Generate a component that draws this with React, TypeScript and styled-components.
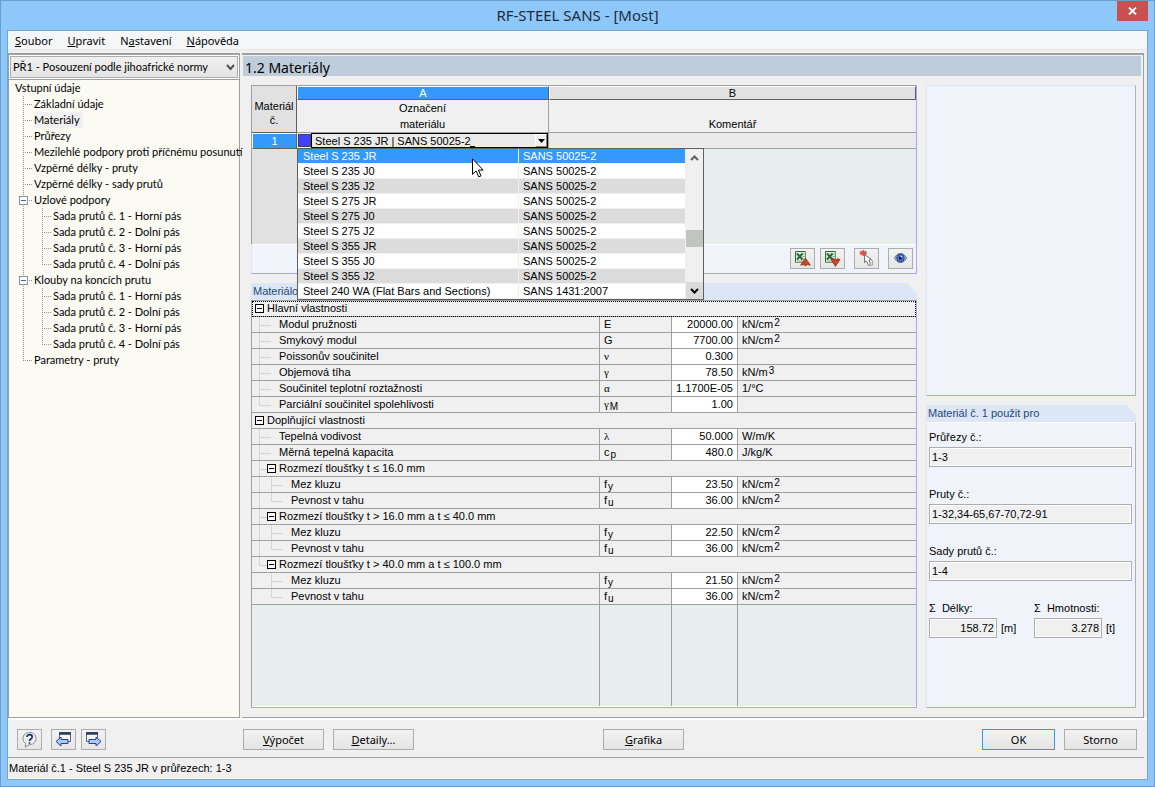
import React from "react";
import styled, { createGlobalStyle, css } from "styled-components";

const GRID_FONT = '"Liberation Sans", Arial, sans-serif';
const UI_FONT = '"Noto Sans", Tahoma, sans-serif';
const TREE_FONT = 'Lato, Tahoma, sans-serif';

const c = {
  frame: "#8ec8fb",
  face: "#f0f0f0",
  line: "#a0a0a0",
  dark: "#606060",
  header: "#e1e1e1",
  blank: "#e8eeed",
  panel: "#f0f4fa",
  panelEdge: "#a8a8f0",
  panelLight: "#dce6f6",
  select: "#3399ff",
};

const Global = createGlobalStyle`
  *, *::before, *::after { box-sizing: border-box; }
  body { margin: 0; background: ${c.frame}; color: #000; font: 11px/16px ${GRID_FONT}; }
  button, input, select { font: inherit; color: inherit; border-radius: 0; margin: 0; }
  ul { list-style: none; margin: 0; padding: 0; }
`;

/* ---------- window frame ---------- */

const Window = styled.div`
  display: flex;
  flex-direction: column;
  min-height: 100vh;
  padding: 0 6px;
  padding-bottom: 6px;
  background: ${c.frame};
  border: 1px solid #6c9cc8;
`;

const TitleBar = styled.header`
  display: grid;
  grid-template-columns: 31px 1fr 31px;
  height: 29px;
`;

const WindowTitle = styled.h1`
  grid-column: 2;
  margin: 0;
  font: 15px/29px ${UI_FONT};
  color: #1c2c3c;
  text-align: center;
`;

const CloseButton = styled.button`
  display: flex;
  align-items: center;
  justify-content: center;
  height: 20px;
  padding: 0;
  border: 0;
  background: #c75050;
`;

const Client = styled.div`
  flex: 1;
  display: flex;
  flex-direction: column;
  background: ${c.face};
  border: 1px solid #74a6d4;
`;

const MenuBar = styled.nav`
  display: flex;
  gap: 15px;
  height: 19px;
  padding: 0 7px;
  background: #f5f6f7;
  border-bottom: 1px solid #e8e8e8;
`;

const MenuItem = styled.a`
  color: #000;
  text-decoration: none;
  font: 11px/20px ${UI_FONT};
`;

const Body = styled.div`
  flex: 1;
  display: grid;
  grid-template-columns: 232px 1fr;
  gap: 2px;
  margin-top: 3px;
  padding-right: 3px;
  border-bottom: 2px solid #fff;
`;

/* ---------- navigator ---------- */

const Navigator = styled.aside`
  display: flex;
  flex-direction: column;
  background: #fff;
  border: 1px solid ${c.line};
  border-width: 2px 1px 1px 1px;
`;

const CaseBox = styled.div`
  position: relative;
  margin: 1px;
`;

const CaseSelect = styled.select`
  display: block;
  width: 100%;
  height: 22px;
  padding: 0 20px 0 2px;
  appearance: none;
  border: 1px solid #adadad;
  background: linear-gradient(#f0f0f0, #e4e4e4);
  font: 11px/20px ${TREE_FONT};
`;

const CaseArrow = styled.svg`
  position: absolute;
  right: 3px;
  top: 8px;
  pointer-events: none;
`;

const Tree = styled.ul`
  flex: 1;
  padding: 0 0 0 6px;
  border-top: 1px solid ${c.line};
  background: #fbfbf3;
  font: 11px/16px ${TREE_FONT};
`;

const TreeRow = styled.li`
  display: flex;
  height: 16px;
  white-space: nowrap;
`;

type GuideShape = { $v: "full" | "half" | "none"; $h?: boolean };

const TreeGuide = styled.span<GuideShape>`
  flex: none;
  width: 19px;
  padding: 4px 0 0 4px;
  background-repeat: no-repeat;
  background-image: repeating-linear-gradient(#909090 0 1px, transparent 1px 2px),
    repeating-linear-gradient(90deg, #909090 0 1px, transparent 1px 2px);
  background-position: 8px 0, 8px 8px;
  background-size: 1px ${(p) => ({ full: "100%", half: "9px", none: "0" })[p.$v]},
    ${(p) => (p.$h ? "9px" : "0")} 1px;
`;

const Toggle = styled.button<{ $flat?: boolean }>`
  display: block;
  flex: none;
  width: 9px;
  height: 9px;
  padding: 0;
  border: 1px solid ${(p) => (p.$flat ? "#000" : "#8a8f99")};
  background: linear-gradient(${(p) => (p.$flat ? "#000, #000" : "#3c66b0, #3c66b0")}) center / 5px 1px no-repeat, #fff;
`;

const TreeLink = styled.a<{ $current?: boolean }>`
  padding-right: 3px;
  color: #000;
  text-decoration: none;
  background: ${(p) => (p.$current ? "#f0f0f0" : "transparent")};
`;

/* ---------- work area ---------- */

const Work = styled.main`
  display: flex;
  flex-direction: column;
  border: 1px solid ${c.line};
  border-width: 2px 1px 1px 0;
  padding: 1px 2px 9px 1px;
`;

const Heading = styled.h2`
  margin: 0 0 9px;
  padding-left: 2px;
  height: 20px;
  font: 14px/23px ${UI_FONT};
  background: #bfcddb;
`;

const Columns = styled.div`
  flex: 1;
  display: grid;
  grid-template-columns: 1fr 210px;
  gap: 9px;
  padding: 0 5px 0 8px;
`;

const Stack = styled.div`
  display: flex;
  flex-direction: column;
  gap: 9px;
  min-width: 0;
`;

const Panel = styled.section`
  display: flex;
  flex-direction: column;
  height: 311px;
  background: ${c.panel};
  border: 1px solid ${c.panelEdge};
  border-top-color: ${c.panelLight};
  border-left-color: ${c.panelLight};
`;

const GridPanel = styled(Panel)`
  height: 189px;
  border-top: 0;
  border-left: 0;
`;

const Group = styled.section`
  flex: 1;
  display: flex;
  flex-direction: column;
`;

const GroupTitle = styled.h3`
  margin: 0;
  height: 17px;
  padding-left: 2px;
  font: 11px/17px ${GRID_FONT};
  color: #1c4a78;
  background: ${c.panelLight};
  clip-path: polygon(0 0, calc(100% - 10px) 0, 100% 10px, 100% 100%, 0 100%);
`;

/* ---------- materials grid ---------- */

const Grid = styled.table`
  width: 100%;
  table-layout: fixed;
  border-collapse: separate;
  border-spacing: 0;
  border-top: 1px solid ${c.line};
  border-left: 1px solid ${c.line};
  th, td { padding: 0; font-weight: normal; }
`;

const CornerHead = styled.th`
  &&& { padding-top: 8px; }
  width: 45px;
  background: ${c.header};
  border-right: 1px solid ${c.dark};
  border-bottom: 1px solid ${c.dark};
  line-height: 14px;
`;

const LetterHead = styled.th<{ $on?: boolean }>`
  width: ${(p) => (p.$on ? "252px" : "auto")};
  height: 14px;
  line-height: 12px;
  border: 1px solid #fff;
  border-right-color: ${c.dark};
  border-bottom-color: ${c.dark};
  color: ${(p) => (p.$on ? "#fff" : "#000")};
  background: ${(p) => (p.$on ? c.select : c.header)};
`;

const NameHead = styled.th`
  height: 33px;
  vertical-align: bottom;
  background: ${c.face};
  border-right: 1px solid ${c.line};
  border-bottom: 1px solid ${c.line};
  &:last-child { border-right: 0; }
`;

const RowHead = styled.th`
  height: 16px;
  line-height: 13px;
  color: #fff;
  background: ${c.select};
  border: 1px solid #fff;
  border-right-color: ${c.dark};
  border-bottom-color: ${c.dark};
`;

const GridCell = styled.td`
  background: #ebebeb;
  border-right: 1px solid ${c.line};
  border-bottom: 1px solid ${c.line};
  &:last-child { border-right: 0; }
`;

const Combo = styled.div`
  position: relative;
  display: flex;
  height: 15px;
`;

const Swatch = styled.span`
  width: 13px;
  margin: 1px 0 1px 1px;
  background: #4040ff;
  border: 1px solid #404060;
`;

const ComboBox = styled.div`
  flex: 1;
  display: flex;
  position: relative;
  min-width: 0;
  padding-left: 3px;
  border: 1px solid #000;
`;

const ComboInput = styled.input`
  flex: 1;
  min-width: 0;
  height: 13px;
  padding: 0;
  border: 0;
  outline: 0;
  background: transparent;
`;

const Caret = styled.span`
  position: absolute;
  left: 158px;
  bottom: 0;
  width: 5px;
  height: 1px;
  background: #000;
`;

const ComboButton = styled.button`
  display: flex;
  align-items: center;
  justify-content: center;
  width: 12px;
  height: 13px;
  padding: 0;
  border: 1px solid #fff;
  border-right-color: #808080;
  border-bottom-color: #808080;
  background: #f0f0f0;
`;

const Popup = styled.div`
  position: absolute;
  z-index: 2;
  top: 15px;
  left: 0;
  display: flex;
  width: 407px;
  border: 1px solid ${c.dark};
  background: #f0f0f0;
`;

const OptionList = styled.ul`
  flex: 1;
`;

const Option = styled.li<{ $on?: boolean }>`
  display: grid;
  grid-template-columns: 220px 1fr;
  height: 15px;
  line-height: 14px;
  color: ${(p) => (p.$on ? "#fff" : "#000")};
  background: #fff;
  border-bottom: 1px solid #f0f0f0;
  &:nth-child(odd) { background: #dcdcdc; }
  &&& { ${(p) => p.$on && css`background: ${c.select};`} }
  span { padding-left: 5px; white-space: nowrap; }
  span + span { padding-left: 4px; border-left: 1px solid #f0f0f0; }
`;

const ScrollBar = styled.div`
  display: flex;
  flex-direction: column;
  justify-content: space-between;
  width: 17px;
  margin-left: 1px;
  background: #f0f0f0;
`;

const ScrollButton = styled.button<{ $dark?: boolean }>`
  display: flex;
  align-items: center;
  justify-content: center;
  height: 17px;
  padding: 0;
  border: 0;
  background: ${(p) => (p.$dark ? "#dadada" : "transparent")};
`;

const Thumb = styled.span`
  height: 17px;
  margin-top: 29px;
  background: #c1c4c1;
`;

const Pointer = styled.svg`
  position: absolute;
  left: 174px;
  top: 9px;
`;

const GridBlank = styled.div`
  flex: 1;
  border-left: 45px solid ${c.header};
  background: ${c.blank};
`;

const GridFrame = styled.div`
  flex: 1;
  display: flex;
  border-left: 1px solid ${c.line};
  border-bottom: 1px solid #fff;
`;

const GridTools = styled.div`
  display: flex;
  justify-content: flex-end;
  align-items: center;
  gap: 9px;
  height: 28px;
  padding: 0 3px 2px 0;
  border-left: 1px solid ${c.panelLight};
`;

const ToolPair = styled.div`
  display: flex;
  gap: 5px;
`;

const IconButton = styled.button`
  display: flex;
  align-items: center;
  justify-content: center;
  width: 25px;
  height: 21px;
  padding: 0;
  border: 1px solid #adadad;
  background: linear-gradient(#f2f2f2, #e6e6e6);
`;

/* ---------- properties ---------- */

const PropsFrame = styled.div`
  flex: 1;
  display: flex;
  flex-direction: column;
  border: 1px solid ${c.panelEdge};
  border-top-color: ${c.line};
  border-left-color: ${c.line};
`;

const PropsTable = styled.table`
  width: 100%;
  table-layout: fixed;
  border-collapse: separate;
  border-spacing: 0;
  td, th {
    height: 16px;
    padding: 0;
    font-weight: normal;
    text-align: left;
    border-bottom: 1px solid ${c.line};
    line-height: 15px;
    white-space: nowrap;
  }
`;

const ColSymbol = styled.col` width: 72px; `;
const ColValue = styled.col` width: 66px; `;
const ColUnit = styled.col` width: 179px; `;

const PropName = styled.div`
  display: flex;
  height: 15px;
  padding-left: 3px;
`;

const PropGuide = styled.span<GuideShape>`
  flex: none;
  width: 12px;
  background-repeat: no-repeat;
  background-image: linear-gradient(#d4d4d4, #d4d4d4), linear-gradient(#d4d4d4, #d4d4d4);
  background-position: 4px 0, 4px 8px;
  background-size: 1px ${(p) => ({ full: "100%", half: "9px", none: "0" })[p.$v]},
    ${(p) => (p.$h ? "8px" : "0")} 1px;
`;

const PropGap = styled.span<{ $dash?: boolean }>`
  flex: none;
  width: 12px;
  background: ${(p) => (p.$dash ? "linear-gradient(#d4d4d4, #d4d4d4) 0 8px / 4px 1px no-repeat" : "none")};
  ${Toggle} { margin-top: 3px; }
`;

const SectionHead = styled.th<{ $focus?: boolean }>`
  outline: ${(p) => (p.$focus ? "1px dotted #000" : "0")};
  outline-offset: -1px;
`;

const Script = styled.small<{ $up?: boolean }>`
  margin-left: 1px;
  font-size: 10px;
  line-height: 0;
  vertical-align: ${(p) => (p.$up ? "2px" : "-2px")};
`;

const SymbolCell = styled.td<{ $greek?: boolean }>`
  &&& { padding-left: 4px; border-left: 1px solid ${c.line}; }
  font-family: ${(p) => (p.$greek ? '"Liberation Serif", Symbol, serif' : "inherit")};
  ${Script} { font-family: ${GRID_FONT}; }
`;

const ValueCell = styled.td`
  &&& { text-align: right; padding-right: 4px; border-left: 1px solid ${c.line}; background: #fff; }
`;

const UnitCell = styled.td`
  &&& { padding-left: 4px; border-left: 1px solid ${c.line}; }
`;

const PropsBlank = styled.div`
  flex: 1;
  display: grid;
  grid-template-columns: 1fr 72px 66px 179px;
  background: ${c.blank};
  border-bottom: 1px solid #fff;
  span + span { border-left: 1px solid ${c.line}; }
`;

/* ---------- usage ---------- */

const UsageBody = styled.div`
  flex: 1;
  padding: 4px 3px 0 2px;
  background: ${c.panel};
  border: 1px solid ${c.panelEdge};
  border-left-color: ${c.panelLight};
  border-top-color: #fff;
`;

const Field = styled.label`
  display: block;
  height: 57px;
  white-space: pre;
`;

const FieldName = styled.span`
  display: block;
  height: 20px;
  line-height: 20px;
`;

const ReadBox = styled.input<{ $short?: boolean }>`
  width: ${(p) => (p.$short ? "68px" : "100%")};
  height: 20px;
  display: ${(p) => (p.$short ? "inline-block" : "block")};
  vertical-align: top;
  padding: 0 2px;
  text-align: ${(p) => (p.$short ? "right" : "left")};
  border: 1px solid #adadad;
  outline: 1px solid #fff;
  outline-offset: -2px;
  background: ${c.face};
`;

const Unit = styled.span`
  padding-left: 4px;
  line-height: 20px;
`;

const FieldPair = styled.div`
  display: grid;
  grid-template-columns: 105px 1fr;
`;

/* ---------- footer ---------- */

const Footer = styled.footer`
  display: grid;
  grid-template-columns: 226px 360px 1fr auto;
  align-items: center;
  height: 37px;
  padding: 2px 10px 0 9px;
`;

const Cluster = styled.div`
  display: flex;
  gap: 9px;
`;

const PushButton = styled.button<{ $main?: boolean; $wide?: boolean }>`
  width: ${(p) => (p.$wide ? 81 : 73)}px;
  height: 21px;
  padding: 0;
  font: 11px/19px ${UI_FONT};
  border: 1px solid ${(p) => (p.$main ? c.select : "#adadad")};
  background: linear-gradient(#f2f2f2, #e4e4e4);
`;

const StatusBar = styled.div`
  height: 22px;
  line-height: 20px;
  margin-right: 3px;
  padding-left: 1px;
  border-top: 1px solid ${c.line};
  border-bottom: 1px solid #fff;
`;

/* ---------- data ---------- */

type V = "full" | "half" | "none";
type TreeNode = { text: string; guides: V[]; toggle?: boolean; current?: boolean };

const sets = ["Horní", "Dolní", "Horní", "Dolní"].map((side, i) => ({
  text: `Sada prutů č. ${i + 1} - ${side} pás`,
  guides: ["full", i === 3 ? "half" : "full"] as V[],
}));

const nodes: TreeNode[] = [
  { text: "Vstupní údaje", guides: [] },
  { text: "Základní údaje", guides: ["full"] },
  { text: "Materiály", guides: ["full"], current: true },
  { text: "Průřezy", guides: ["full"] },
  { text: "Mezilehlé podpory proti příčnému posunutí", guides: ["full"] },
  { text: "Vzpěrné délky - pruty", guides: ["full"] },
  { text: "Vzpěrné délky - sady prutů", guides: ["full"] },
  { text: "Uzlové podpory", guides: ["full"], toggle: true },
  ...sets,
  { text: "Klouby na koncích prutu", guides: ["full"], toggle: true },
  ...sets,
  { text: "Parametry - pruty", guides: ["half"] },
];

const options = [
  ...["235 JR", "235 J0", "235 J2", "275 JR", "275 J0", "275 J2", "355 JR", "355 J0", "355 J2"].map((g) => [
    `Steel S ${g}`,
    "SANS 50025-2",
  ]),
  ["Steel 240 WA (Flat Bars and Sections)", "SANS 1431:2007"],
];

type PropRow = {
  name: string;
  guides: V[];
  sym?: string;
  greek?: boolean;
  sub?: string;
  value?: string;
  unit?: string;
  sup?: string;
};

const strength = (title: string, fy: string, last?: boolean): PropRow[] => {
  const outer: V = last ? "none" : "full";
  return [
    { name: title, guides: [last ? "half" : "full"] },
    { name: "Mez kluzu", guides: [outer, "full"], sym: "f", sub: "y", value: fy, unit: "kN/cm", sup: "2" },
    { name: "Pevnost v tahu", guides: [outer, "half"], sym: "f", sub: "u", value: "36.00", unit: "kN/cm", sup: "2" },
  ];
};

const rows: PropRow[] = [
  { name: "Hlavní vlastnosti", guides: [] },
  { name: "Modul pružnosti", guides: ["full"], sym: "E", value: "20000.00", unit: "kN/cm", sup: "2" },
  { name: "Smykový modul", guides: ["full"], sym: "G", value: "7700.00", unit: "kN/cm", sup: "2" },
  { name: "Poissonův součinitel", guides: ["full"], sym: "ν", greek: true, value: "0.300" },
  { name: "Objemová tíha", guides: ["full"], sym: "γ", greek: true, value: "78.50", unit: "kN/m", sup: "3" },
  { name: "Součinitel teplotní roztažnosti", guides: ["full"], sym: "α", greek: true, value: "1.1700E-05", unit: "1/°C" },
  { name: "Parciální součinitel spolehlivosti", guides: ["half"], sym: "γ", greek: true, sub: "M", value: "1.00" },
  { name: "Doplňující vlastnosti", guides: [] },
  { name: "Tepelná vodivost", guides: ["full"], sym: "λ", greek: true, value: "50.000", unit: "W/m/K" },
  { name: "Měrná tepelná kapacita", guides: ["full"], sym: "c", sub: "p", value: "480.0", unit: "J/kg/K" },
  ...strength("Rozmezí tloušťky t ≤ 16.0 mm", "23.50"),
  ...strength("Rozmezí tloušťky t > 16.0 mm a t ≤ 40.0 mm", "22.50"),
  ...strength("Rozmezí tloušťky t > 40.0 mm a t ≤ 100.0 mm", "21.50", true),
];

const usage = [
  ["Průřezy č.:", "1-3"],
  ["Pruty č.:", "1-32,34-65,67-70,72-91"],
  ["Sady prutů č.:", "1-4"],
];

/* ---------- icons ---------- */

const SheetIcon = ({ down }: { down?: boolean }) => (
  <svg width="17" height="17" viewBox="0 0 17 17">
    <path d="M1 1h10.500v11.500H1z" fill="#dcebd9" />
    <path d="M1.500 12.500v-11h10" fill="none" stroke="#2f6a35" />
    <path d="M11.500 1.500v11h-10" fill="none" stroke="#6f9a70" />
    <path d="M8.500 4h2.500M8.500 6.500h2.500M8.500 9h2.500M3 11h7" stroke="#8fae8c" />
    <path d="M3 3.500l5.500 6M8.500 3.500l-5.500 6" stroke="#2c6a37" strokeWidth="2" />
    {down ? (
      <path d="M7 9.500l2.500-.8 2 1.300 2-1.300 2.500.8-4.500 6.800z" fill="#cf4424" stroke="#8c2c12" strokeWidth=".8" />
    ) : (
      <path d="M11.500 8.200l4.800 7-2.800-.6-2 1.200-2-1.200-2.800.6z" fill="#cf4424" stroke="#8c2c12" strokeWidth=".8" />
    )}
  </svg>
);

const PickIcon = () => (
  <svg width="17" height="17" viewBox="0 0 17 17">
    <path d="M2.500 1l5.500 4M8 1l-5.500 4M5.300 0v6M1.500 3h7.500" stroke="#d8504c" strokeWidth="1.400" />
    <path d="M6.500 4.500v8l2-1.500 2 4.500 2-1-1.500-4.500 2.500-.5z" fill="#fff" stroke="#666" strokeWidth=".9" />
    <path d="M12 8l2.500 3v4l-2 1" fill="none" stroke="#999" strokeWidth=".9" />
  </svg>
);

const EyeIcon = () => (
  <svg width="15" height="12" viewBox="0 0 15 12">
    <path d="M1.500 6c2-3.500 4-4.500 6-4.500s4 1 6 4.500c-2 3.500-4 4.500-6 4.500S3.500 9.500 1.500 6z" fill="#c8d4e8" stroke="#4c5c80" strokeWidth=".9" />
    <circle cx="7.500" cy="6" r="3.800" fill="#4c80dc" stroke="#1c3c88" />
    <circle cx="7.500" cy="6" r="1.800" fill="#0c1838" />
    <circle cx="8.300" cy="4.800" r=".8" fill="#fff" />
  </svg>
);

const HelpIcon = () => (
  <svg width="17" height="17" viewBox="0 0 17 17">
    <path d="M8.500 1.500c4 0 6.500 2.500 6.500 6s-2.500 6-6 6L4 16l1-3.500C3 11.500 2 9.500 2 7.500c0-3.500 2.500-6 6.500-6z" fill="#eceef2" stroke="#8a8e96" />
    <path d="M6 6c0-3.500 5.500-3 5.200 0-.2 2-2.700 2-2.700 4M8.500 11.200v1.600" fill="none" stroke="#1c2c6c" strokeWidth="1.700" />
  </svg>
);

const StepIcon = ({ next }: { next?: boolean }) => (
  <svg width="17" height="17" viewBox="0 0 17 17">
    <g transform={next ? "translate(17 0) scale(-1 1)" : undefined}>
      <path d="M4.500 1.500h11v9h-11z" fill="#f4f6fa" stroke="#5c6474" />
      <path d="M4 2.500h12" stroke="#2c3c5c" strokeWidth="2.500" />
      <path d="M1 10.500l5-4.500v2.500h7v4H6V15z" fill="#a8ccf4" stroke="#24409c" />
    </g>
  </svg>
);

const Chevron = ({ up, color }: { up?: boolean; color: string }) => (
  <svg width="9" height="6" viewBox="0 0 9 6">
    <path d={up ? "M1 5l3.500-3.500L8 5" : "M1 1l3.500 3.500L8 1"} fill="none" stroke={color} strokeWidth="2" />
  </svg>
);

/* ---------- parts ---------- */

const NavTree = () => (
  <Tree>
    {nodes.map((n, i) => (
      <TreeRow key={i}>
        {n.guides.map((v, g) => (
          <TreeGuide key={g} $v={v} $h={g === n.guides.length - 1}>
            {n.toggle && <Toggle aria-label="Sbalit" />}
          </TreeGuide>
        ))}
        <TreeLink href="#" $current={n.current}>{n.text}</TreeLink>
      </TreeRow>
    ))}
  </Tree>
);

const MaterialGrid = () => (
  <Grid>
    <thead>
      <tr>
        <CornerHead rowSpan={2}>Materiál<br />č.</CornerHead>
        <LetterHead $on>A</LetterHead>
        <LetterHead>B</LetterHead>
      </tr>
      <tr>
        <NameHead>Označení<br />materiálu</NameHead>
        <NameHead>Komentář</NameHead>
      </tr>
    </thead>
    <tbody>
      <tr>
        <RowHead>1</RowHead>
        <GridCell>
          <Combo>
            <Swatch />
            <ComboBox>
              <ComboInput aria-label="Označení materiálu" defaultValue="Steel S 235 JR | SANS 50025-2" />
              <Caret />
              <ComboButton aria-label="Rozbalit">
                <svg width="7" height="4" viewBox="0 0 7 4"><path d="M0 0h7L3.500 4z" /></svg>
              </ComboButton>
            </ComboBox>
            <Popup>
              <OptionList role="listbox" aria-label="Materiály">
                {options.map(([name, norm], i) => (
                  <Option key={name} role="option" aria-selected={i === 0} $on={i === 0}>
                    <span>{name}</span>
                    <span>{norm}</span>
                  </Option>
                ))}
              </OptionList>
              <ScrollBar>
                <ScrollButton aria-label="Nahoru"><Chevron up color="#606060" /></ScrollButton>
                <Thumb />
                <ScrollButton $dark aria-label="Dolů"><Chevron color="#000" /></ScrollButton>
              </ScrollBar>
              <Pointer width="12" height="20" viewBox="0 0 12 20">
                <path d="M.5.8v15.500l3.600-3.400 2.700 6 2.200-1-2.600-5.800h4.800z" fill="#fff" stroke="#000" />
              </Pointer>
            </Popup>
          </Combo>
        </GridCell>
        <GridCell />
      </tr>
    </tbody>
  </Grid>
);

const PropertyTable = () => (
  <PropsTable>
    <colgroup>
      <col />
      <ColSymbol />
      <ColValue />
      <ColUnit />
    </colgroup>
    <tbody>
      {rows.map((r, i) => {
        const label = (
          <PropName>
            {r.guides.map((v, g) => (
              <PropGuide key={g} $v={v} $h={g === r.guides.length - 1} />
            ))}
            <PropGap $dash={!!r.value}>{!r.value && <Toggle $flat aria-label="Sbalit" />}</PropGap>
            {r.name}
          </PropName>
        );
        return r.value ? (
          <tr key={i}>
            <td>{label}</td>
            <SymbolCell $greek={r.greek}>{r.sym}{r.sub && <Script>{r.sub}</Script>}</SymbolCell>
            <ValueCell>{r.value}</ValueCell>
            <UnitCell>{r.unit}{r.sup && <Script $up>{r.sup}</Script>}</UnitCell>
          </tr>
        ) : (
          <tr key={i}>
            <SectionHead colSpan={4} $focus={i === 0}>{label}</SectionHead>
          </tr>
        );
      })}
    </tbody>
  </PropsTable>
);

const UsageField = ({ name, value, unit }: { name: string; value: string; unit?: string }) => (
  <Field>
    <FieldName>{name}</FieldName>
    <ReadBox readOnly value={value} $short={!!unit} />
    {unit && <Unit>{unit}</Unit>}
  </Field>
);

const Usage = () => (
  <UsageBody>
    {usage.map(([name, value]) => (
      <UsageField key={name} name={name} value={value} />
    ))}
    <FieldPair>
      <UsageField name="Σ  Délky:" value="158.72" unit="[m]" />
      <UsageField name="Σ  Hmotnosti:" value="3.278" unit="[t]" />
    </FieldPair>
  </UsageBody>
);

export default function App() {
  return (
    <>
      <Global />
      <Window>
        <TitleBar>
          <WindowTitle>RF-STEEL SANS - [Most]</WindowTitle>
          <CloseButton aria-label="Zavřít">
            <svg width="9" height="8" viewBox="0 0 9 8">
              <path d="M1 .5l7 7M8 .5l-7 7" stroke="#fff" strokeWidth="1.800" />
            </svg>
          </CloseButton>
        </TitleBar>
        <Client>
          <MenuBar>
            <MenuItem href="#"><u>S</u>oubor</MenuItem>
            <MenuItem href="#"><u>U</u>pravit</MenuItem>
            <MenuItem href="#">N<u>a</u>stavení</MenuItem>
            <MenuItem href="#"><u>N</u>ápověda</MenuItem>
          </MenuBar>
          <Body>
            <Navigator>
              <CaseBox>
                <CaseSelect aria-label="Návrhový případ">
                  <option>PŘ1 - Posouzení podle jihoafrické normy</option>
                </CaseSelect>
                <CaseArrow width="9" height="7" viewBox="0 0 9 7">
                  <path d="M1 1l3.500 4L8 1" fill="none" stroke="#505050" strokeWidth="2" />
                </CaseArrow>
              </CaseBox>
              <NavTree />
            </Navigator>
            <Work>
              <Heading>1.2 Materiály</Heading>
              <Columns>
                <Stack>
                  <GridPanel>
                    <MaterialGrid />
                    <GridFrame><GridBlank /></GridFrame>
                    <GridTools>
                      <ToolPair>
                        <IconButton aria-label="Export do Excelu"><SheetIcon /></IconButton>
                        <IconButton aria-label="Import z Excelu"><SheetIcon down /></IconButton>
                      </ToolPair>
                      <IconButton aria-label="Vybrat"><PickIcon /></IconButton>
                      <IconButton aria-label="Zobrazit"><EyeIcon /></IconButton>
                    </GridTools>
                  </GridPanel>
                  <Group>
                    <GroupTitle>Materiálo</GroupTitle>
                    <PropsFrame>
                      <PropertyTable />
                      <PropsBlank><span /><span /><span /><span /></PropsBlank>
                    </PropsFrame>
                  </Group>
                </Stack>
                <Stack>
                  <Panel />
                  <Group>
                    <GroupTitle>Materiál č. 1 použit pro</GroupTitle>
                    <Usage />
                  </Group>
                </Stack>
              </Columns>
            </Work>
          </Body>
          <Footer>
            <Cluster>
              <IconButton aria-label="Nápověda"><HelpIcon /></IconButton>
              <ToolPair>
                <IconButton aria-label="Předchozí"><StepIcon /></IconButton>
                <IconButton aria-label="Další"><StepIcon next /></IconButton>
              </ToolPair>
            </Cluster>
            <Cluster>
              <PushButton $wide><u>V</u>ýpočet</PushButton>
              <PushButton $wide><u>D</u>etaily...</PushButton>
            </Cluster>
            <Cluster>
              <PushButton $wide><u>G</u>rafika</PushButton>
            </Cluster>
            <Cluster>
              <PushButton $main>OK</PushButton>
              <PushButton>Storno</PushButton>
            </Cluster>
          </Footer>
          <StatusBar>Materiál č.1 - Steel S 235 JR v průřezech: 1-3</StatusBar>
        </Client>
      </Window>
    </>
  );
}
